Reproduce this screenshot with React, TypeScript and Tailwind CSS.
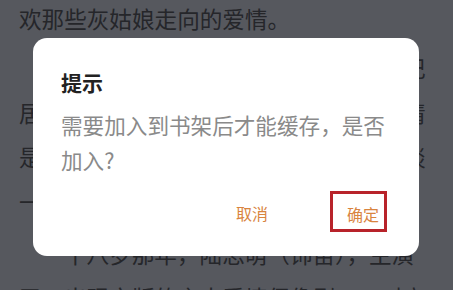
import React from "react";

const pageFont = { fontFamily: '"Noto Sans CJK SC", "Noto Sans", sans-serif' };

export default function App() {
  return (
    <div
      className="relative w-[453px] h-[290px] overflow-hidden bg-[#56585e] text-[#25262a]"
      style={pageFont}
    >
      {/* reading page behind the dimmed overlay */}
      <div className="px-[19px] -mt-[3px] text-[22.6px] leading-[44.4px] whitespace-nowrap">
        <p>欢那些灰姑娘走向的爱情。</p>
        <p className="mt-[5px]">
          <span className="block indent-[45px]">很多年后，她依然会想起那本旧日记</span>
          <span className="block">居然写满了她年少时所有关于未来的爱情</span>
          <span className="block">是啊，那时候的她总以为，爱就是一场谈</span>
          <span className="block">一辈子的事情。</span>
        </p>
        <p className="mt-[8px]">
          <span className="block indent-[45px]">十八岁那年，陆思萌（饰苗），主演</span>
          <span className="block">了，出现宫版的言大爱情偶像剧，一对立</span>
        </p>
      </div>

      {/* dialog */}
      <div className="absolute left-[33px] top-[38px] w-[386px] h-[218px] bg-white rounded-[14px] flex flex-col pl-[28px] pr-[32px] pt-[30px]">
        <h2 className="text-[21px] leading-[28px] font-bold text-[#222222]">提示</h2>
        <p className="mt-[11px] text-[21.6px] leading-[35px] text-[#8a8a8a]">
          需要加入到书架后才能缓存，是否
          <br />
          加入?
        </p>
        <div className="flex items-center justify-end gap-[62px] mt-[14px]">
          <button className="text-[16px] leading-[20px] text-[#d9843f] pt-[3px]">取消</button>
          <button className="w-[57px] h-[41px] border-[3px] border-[#b8232a] text-[16px] leading-[20px] text-[#d9843f] flex items-center justify-start pl-[14px] pt-[5px]">
            确定
          </button>
        </div>
      </div>
    </div>
  );
}
